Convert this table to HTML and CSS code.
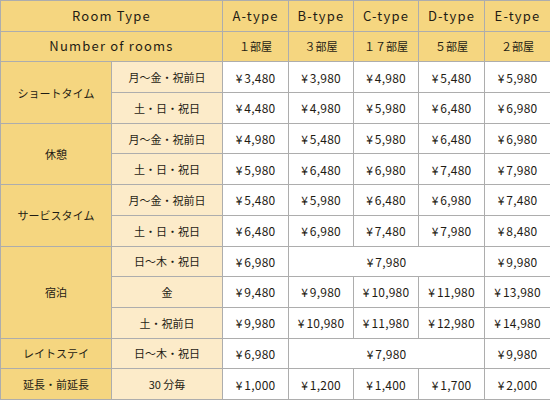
FILE: index.html
```html
<!DOCTYPE html>
<html lang="ja">
<head>
<meta charset="utf-8">
<link rel="stylesheet" href="styles.css">
</head>
<body>
<table class="price">
  <colgroup>
    <col class="c-label"><col class="c-day">
    <col class="c-a"><col class="c-b"><col class="c-c"><col class="c-d"><col class="c-e">
  </colgroup>
  <tr class="head">
    <th colspan="2" class="en">Room Type</th>
    <th class="en">A-type</th><th class="en">B-type</th><th class="en">C-type</th><th class="en">D-type</th><th class="en">E-type</th>
  </tr>
  <tr class="head">
    <th colspan="2" class="en">Number of rooms</th>
    <th>１部屋</th><th>３部屋</th><th>１７部屋</th><th>５部屋</th><th>２部屋</th>
  </tr>
  <tr>
    <th rowspan="2" class="label">ショートタイム</th>
    <td class="day">月～金・祝前日</td>
    <td>¥ 3,480</td><td>¥ 3,980</td><td>¥ 4,980</td><td>¥ 5,480</td><td>¥ 5,980</td>
  </tr>
  <tr>
    <td class="day">土・日・祝日</td>
    <td>¥ 4,480</td><td>¥ 4,980</td><td>¥ 5,980</td><td>¥ 6,480</td><td>¥ 6,980</td>
  </tr>
  <tr>
    <th rowspan="2" class="label">休憩</th>
    <td class="day">月～金・祝前日</td>
    <td>¥ 4,980</td><td>¥ 5,480</td><td>¥ 5,980</td><td>¥ 6,480</td><td>¥ 6,980</td>
  </tr>
  <tr>
    <td class="day">土・日・祝日</td>
    <td>¥ 5,980</td><td>¥ 6,480</td><td>¥ 6,980</td><td>¥ 7,480</td><td>¥ 7,980</td>
  </tr>
  <tr>
    <th rowspan="2" class="label">サービスタイム</th>
    <td class="day">月～金・祝前日</td>
    <td>¥ 5,480</td><td>¥ 5,980</td><td>¥ 6,480</td><td>¥ 6,980</td><td>¥ 7,480</td>
  </tr>
  <tr>
    <td class="day">土・日・祝日</td>
    <td>¥ 6,480</td><td>¥ 6,980</td><td>¥ 7,480</td><td>¥ 7,980</td><td>¥ 8,480</td>
  </tr>
  <tr>
    <th rowspan="3" class="label">宿泊</th>
    <td class="day">日～木・祝日</td>
    <td>¥ 6,980</td><td colspan="3">¥ 7,980</td><td>¥ 9,980</td>
  </tr>
  <tr>
    <td class="day">金</td>
    <td>¥ 9,480</td><td>¥ 9,980</td><td>¥ 10,980</td><td>¥ 11,980</td><td>¥ 13,980</td>
  </tr>
  <tr>
    <td class="day">土・祝前日</td>
    <td>¥ 9,980</td><td>¥ 10,980</td><td>¥ 11,980</td><td>¥ 12,980</td><td>¥ 14,980</td>
  </tr>
  <tr>
    <th class="label">レイトステイ</th>
    <td class="day">日～木・祝日</td>
    <td>¥ 6,980</td><td colspan="3">¥ 7,980</td><td>¥ 9,980</td>
  </tr>
  <tr>
    <th class="label">延長・前延長</th>
    <td class="day">30 分毎</td>
    <td>¥ 1,000</td><td>¥ 1,200</td><td>¥ 1,400</td><td>¥ 1,700</td><td>¥ 2,000</td>
  </tr>
</table>
</body>
</html>
```

FILE: styles.css
```css
html, body {
  margin: 0;
  padding: 0;
  background: #ffffff;
}

.price {
  width: 550px;
  height: 400px;
  border-collapse: collapse;
  table-layout: fixed;
  font-family: "Noto Sans CJK JP", "Noto Sans", sans-serif;
  font-size: 11px;
  color: #1f1c14;
}

.price tr { height: 30px; }

.c-label, .c-day { width: 111px; }
.c-a { width: 66px; }
.c-b, .c-c { width: 65px; }
.c-d, .c-e { width: 66px; }

.price th,
.price td {
  border: 1px solid #adadad;
  text-align: center;
  vertical-align: middle;
  padding: 0;
  font-weight: normal;
  line-height: 1.1;
  white-space: nowrap;
}

.price td {
  background: #ffffff;
  font-size: 12px;
  letter-spacing: 0.2px;
  word-spacing: -1px;
}

.head th {
  background: #f5d680;
  font-size: 11px;
}

.head th.en {
  font-size: 13px;
  letter-spacing: 1.2px;
}

.price th.label {
  background: #f5d680;
  font-size: 11px;
}

.price td.day {
  background: #fcebc9;
  font-size: 11px;
  letter-spacing: 0;
  word-spacing: 0;
}
```
